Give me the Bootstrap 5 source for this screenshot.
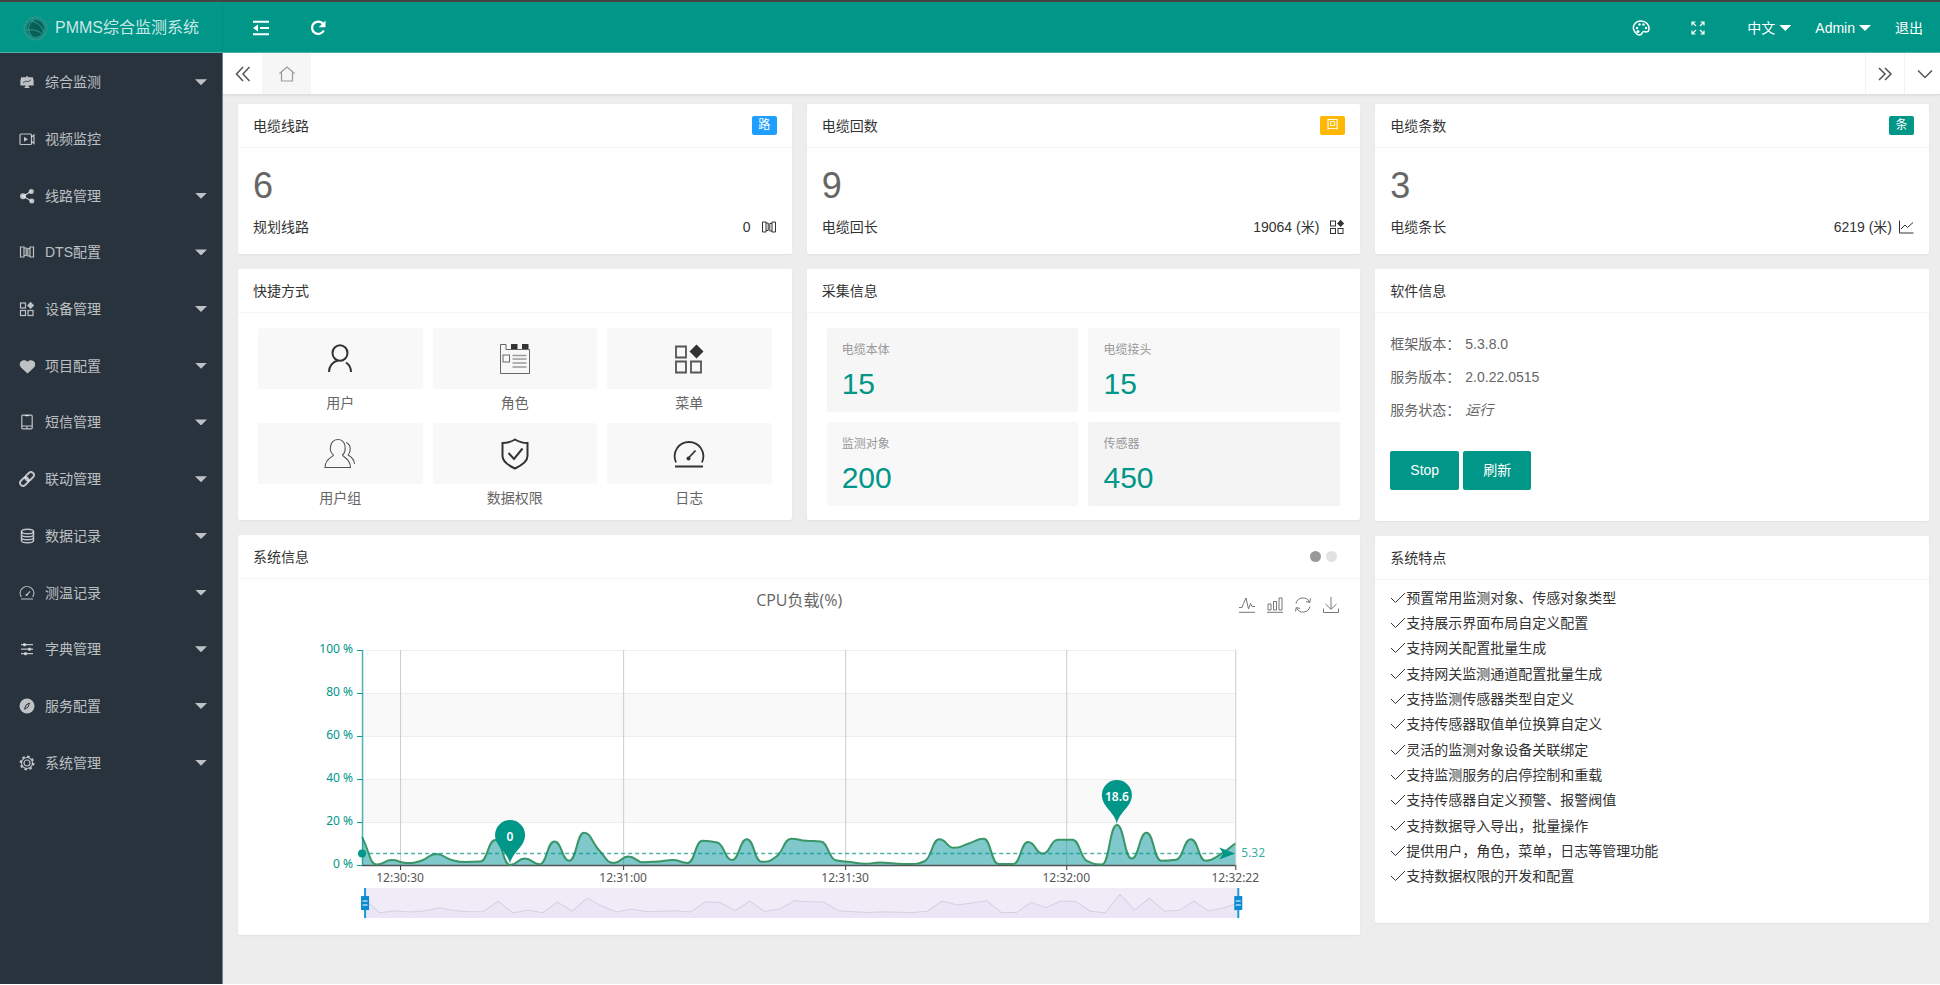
<!DOCTYPE html>
<html lang="zh-CN">
<head>
<meta charset="utf-8">
<meta name="viewport" content="width=device-width, initial-scale=1">
<title>PMMS综合监测系统</title>
<link href="https://cdn.jsdelivr.net/npm/bootstrap@5.3.0/dist/css/bootstrap.min.css" rel="stylesheet">
<style>
:root{--teal:#009688;--side:#28333e}
body{font-family:"Liberation Sans","Noto Sans CJK SC",sans-serif;font-size:14px;line-height:20px;color:#333;background:#ededed;border-top:2px solid #444;border-bottom:1px solid #fff}
a{color:inherit;text-decoration:none}
svg.ico{width:16px;height:16px;fill:none;stroke:currentColor;stroke-width:1.2;flex:none}
svg.ico.lg{width:18px;height:18px}
svg .solid{fill:currentColor;stroke:none}
.tri{width:12px;height:6px;background:currentColor;clip-path:polygon(0 0,100% 0,50% 100%);flex:none}
.btn-plain{background:none;border:0;padding:0;color:inherit;display:inline-flex;align-items:center}
.topbar{background:var(--teal);height:51px;color:#fff;border-bottom:1px solid #4db0a6;padding-top:2px}
.brandbox{width:223px;padding-left:23px;gap:7px;font-size:16px;color:rgba(255,255,255,.8);border-right:1px solid #028c80}
.brandbox svg{width:25px;height:25px}
.topleft{padding-left:29px;gap:39px}
.topright{padding-right:17px;gap:24px}
.topright .lg{margin-right:16px}
.topright .full{margin-right:17px}
.side{width:223px;background:var(--side);color:rgba(255,255,255,.7);border-right:1px solid #7a8188;padding-top:1px}
.menu{height:737px;display:grid;grid-template-rows:repeat(13,1fr)}
.menu a{display:flex;align-items:center;padding:0 15px 0 19px;gap:10px}
.menu .tri{margin-left:auto}
.tabs{height:42px;background:#fff;border-bottom:1px solid #ddd;color:#555;box-shadow:0 1px 2px rgba(0,0,0,.06)}
.tabs .hometab{width:49px;background:#f6f6f6;color:#999;display:flex;align-items:center;justify-content:center}
.tabs .sq{width:39px;justify-content:center}
.tabs .sq.last{padding-left:4px;width:36px}
.tabs .rule{border-left:1px solid #f2f2f2}
.content{padding:9px 11px 48px 15px}
.gut{--bs-gutter-x:15px;--bs-gutter-y:15px}
.panel{background:#fff;border-radius:2px;box-shadow:0 1px 2px rgba(0,0,0,.05)}
.panel-h{height:44px;border-bottom:1px solid #f5f5f5;padding:0 15px;display:flex;align-items:center;justify-content:space-between;margin:0;font-size:14px;font-weight:400;line-height:20px}
.tag{font-size:12px;line-height:18px;width:25px;text-align:center;color:#fff;border-radius:2px;height:19px}
.count{height:106px;padding:20px 15px 0}
.count .big{font-size:36px;line-height:36px;color:#666;margin-bottom:13px}
.count .ico{stroke-width:1}
.mid{height:207px;padding:15px 20px 0}
.tiles{display:grid;grid-template-columns:repeat(3,1fr);column-gap:10px;row-gap:5px;align-content:start;text-align:center;color:#666}
.tiles a{display:block}
.tiles .pic{height:61px;background:#f8f8f8;border-radius:2px;display:flex;align-items:center;justify-content:center;color:#333}
.tiles .pic svg{width:32px;height:32px}
.tiles .cap{display:block;height:29px;line-height:28px}
.stats{display:grid;grid-template-columns:repeat(2,1fr);gap:10px}
.stat{height:84px;background:#f8f8f8;border-radius:2px;padding:12px 15px;font-size:12px;color:#999}
.stat b{display:block;font-weight:400;font-size:30px;line-height:36px;color:var(--teal);margin-top:6px}
.soft{height:208px;padding:14px 15px 0;color:#666}
.soft dl{margin:0 0 25px}
.soft dl div{display:flex;height:33px;align-items:center}
.soft dt{font-weight:400;width:75px}
.soft dd{margin:0}
.btn-teal{--bs-btn-bg:var(--teal);--bs-btn-color:#fff;--bs-btn-border-width:0;--bs-btn-hover-bg:#33ab9f;--bs-btn-hover-color:#fff;--bs-btn-border-radius:2px;--bs-btn-font-size:14px;height:39px;padding:0 20px}
.feats{height:343px;padding:5px 15px 0}
.feats ul{list-style:none;margin:0;padding:0;height:304px;display:grid;grid-template-rows:repeat(12,1fr)}
.feats li{display:flex;align-items:center}
.pager{width:11px;height:11px;border-radius:50%;background:#e2e2e2;border:0;padding:0}
.pager.on{background:#999}
.charthead{display:grid;grid-template-columns:1fr auto 1fr;height:49px;padding:0 21px;color:#666}
.charthead .cap{font:16px/42px "Open Sans","Noto Sans CJK SC",sans-serif}
.charthead .tools{display:flex;justify-content:flex-end;gap:12px;padding-top:3px;color:#777}
.charthead .ico{stroke-width:1}
.plot{display:block;width:100%;height:auto;font:12px "Noto Sans","Noto Sans CJK SC",sans-serif}
</style>
</head>
<body class="d-flex flex-column min-vh-100">

<svg width="0" height="0" class="position-absolute" aria-hidden="true">
  <symbol id="i-board" viewBox="0 0 16 16"><path class="solid" d="M7.3 2h1.4v1.200h5.300v2h.6v6.300H9l1.800 2.500H5.200L7 11.500H1.400V5.200H2v-2h5.300z"/><path d="M4 8.800l3-1.800 2 .8 3-2" stroke="#28333e" stroke-width=".8"/></symbol>
  <symbol id="i-video" viewBox="0 0 16 16"><rect x="1" y="3" width="11.500" height="10.500" rx="1"/><path d="M12.500 6L15 4v8.500l-2.500-2"/><path class="solid" d="M5 5.800l4 2.500-4 2.500z"/></symbol>
  <symbol id="i-share" viewBox="0 0 16 16"><circle class="solid" cx="4" cy="8.300" r="3"/><circle class="solid" cx="12.300" cy="3.600" r="2.500"/><circle class="solid" cx="12.800" cy="13" r="2.500"/><path d="M12 3.500L4 8.300l8.500 4.700"/></symbol>
  <symbol id="i-cols" viewBox="0 0 16 16"><path d="M1.500 3H5v10H1.500zM11 3h3.500v10H11zM5 4h2.200v7.500H5M11 4.500H8.800V12H11"/></symbol>
  <symbol id="i-apps" viewBox="0 0 16 16"><rect x="1.500" y="2" width="5" height="5"/><rect x="1.500" y="9.500" width="5" height="5"/><rect x="9" y="9.500" width="5" height="5"/><path class="solid" d="M11.600 .8l3.500 3.600-3.500 3.600L8 4.400z"/></symbol>
  <symbol id="i-heart" viewBox="0 0 16 16"><path class="solid" d="M8.500 15.500L2 9.500C-2 5 4-.5 8.500 3.700 13-.5 19 5 15 9.500z"/></symbol>
  <symbol id="i-phone" viewBox="0 0 16 16"><rect x="2.800" y="1.200" width="10.400" height="13.600" rx="1"/><path d="M2.800 12h10.400M6 1.700h4M8 12.500v2"/></symbol>
  <symbol id="i-link" viewBox="0 0 16 16"><g stroke-width="1.900" transform="rotate(-45 8 8)"><rect x="-.5" y="5" width="9.500" height="6" rx="3"/><rect x="7" y="5" width="9.500" height="6" rx="3"/></g></symbol>
  <symbol id="i-db" viewBox="0 0 16 16"><g stroke-width="1.500"><ellipse cx="8.500" cy="3.500" rx="6" ry="2.300"/><path d="M2.500 3.500v9c0 3 12 3 12 0v-9M2.500 6.500c0 3 12 3 12 0M2.500 9.500c0 3 12 3 12 0"/></g></symbol>
  <symbol id="i-gauge" viewBox="0 0 16 16"><path d="M2.300 12A6.800 6.800 0 1 1 13.700 12M2 14h12M7.800 9.800L11 6.300"/><circle class="solid" cx="7.600" cy="10" r="1.100"/></symbol>
  <symbol id="i-sliders" viewBox="0 0 16 16"><path d="M2 3.700h12M2 8.200h12M2 12.700h12"/><path d="M5.500 2.200v3M10.500 6.700v3M6.500 11.200v3" stroke-width="2.400"/></symbol>
  <symbol id="i-compass" viewBox="0 0 16 16"><circle class="solid" cx="8" cy="8" r="7.500"/><path d="M10.500 5L9 9.200 5.500 11.200 7 7z" stroke="#28333e" stroke-width="1"/></symbol>
  <symbol id="i-gear" viewBox="0 0 16 16"><circle cx="8" cy="8" r="3"/><circle cx="8" cy="8" r="5.500"/><circle cx="8" cy="8" r="6.600" stroke-width="1.700" stroke-dasharray="2.600 2.580"/></symbol>
  <symbol id="i-check" viewBox="0 0 16 16"><path d="M1 8l4.500 4.500L15 3" stroke-width="1"/></symbol>
</svg>

<header class="topbar d-flex">
  <a href="#" class="brandbox d-flex align-items-center">
    <svg viewBox="0 0 25 25" fill="none"><circle cx="12.500" cy="12.500" r="11.200" stroke="#4f9189" stroke-width="1.800" stroke-dasharray="1.500 1.200"/><circle cx="12.500" cy="12.500" r="8.800" fill="#066057" stroke="#2f8078"/><path d="M10 4.500c-5 4-6 10-1 16M8 5c6 1 11 5 12.500 11M4 14c6-1 12 1 15 4" stroke="#37a095" stroke-width=".9"/></svg>
    <span>PMMS综合监测系统</span>
  </a>
  <div class="topleft d-flex align-items-center flex-grow-1">
    <button class="btn-plain" aria-label="收起菜单"><svg class="ico lg" viewBox="0 0 18 18"><path d="M1 2.800h16M8 9h9M1 15.200h16" stroke-width="2"/><path class="solid" d="M1 9l5-3.500v7z"/></svg></button>
    <button class="btn-plain" aria-label="刷新"><svg class="ico lg" viewBox="0 0 18 18"><path d="M14.200 5A6.200 6.200 0 1 0 14.800 11.500" stroke-width="2.300"/><path class="solid" d="M16.500 1.500v6.800H9.700z"/></svg></button>
  </div>
  <nav class="topright d-flex align-items-center">
    <button class="btn-plain" aria-label="主题"><svg class="ico lg" viewBox="0 0 18 18"><path d="M3 13C-1 8 3 2 9 2c5 0 8.500 4 8 8.500-.3 3-3.500 2.500-5 2-2-.5-1.500 3.500-4.500 3.500-2 0-3.500-1.500-4.500-3z" stroke-width="1.500"/><g class="solid"><circle cx="5" cy="9" r="1.200"/><circle cx="7.500" cy="5.500" r="1.200"/><circle cx="11.500" cy="5.500" r="1.200"/><circle cx="14" cy="9" r="1.200"/><circle cx="6" cy="12.500" r="1.500"/></g></svg></button>
    <button class="btn-plain full" aria-label="全屏"><svg class="ico" viewBox="0 0 16 16"><path d="M2 5.500V2h3.500M2 2l4 4M10.500 2H14v3.500M14 2l-4 4M2 10.500V14h3.500M2 14l4-4M14 10.500V14h-3.500M14 14l-4-4"/></svg></button>
    <a href="#" class="d-flex align-items-center gap-1">中文<span class="tri"></span></a>
    <a href="#" class="d-flex align-items-center gap-1">Admin<span class="tri"></span></a>
    <a href="#">退出</a>
  </nav>
</header>

<div class="d-flex flex-grow-1">
  <aside class="side flex-shrink-0">
    <nav class="menu">
      <a href="#"><svg class="ico"><use href="#i-board"/></svg>综合监测<span class="tri"></span></a>
      <a href="#"><svg class="ico"><use href="#i-video"/></svg>视频监控</a>
      <a href="#"><svg class="ico"><use href="#i-share"/></svg>线路管理<span class="tri"></span></a>
      <a href="#"><svg class="ico"><use href="#i-cols"/></svg>DTS配置<span class="tri"></span></a>
      <a href="#"><svg class="ico"><use href="#i-apps"/></svg>设备管理<span class="tri"></span></a>
      <a href="#"><svg class="ico"><use href="#i-heart"/></svg>项目配置<span class="tri"></span></a>
      <a href="#"><svg class="ico"><use href="#i-phone"/></svg>短信管理<span class="tri"></span></a>
      <a href="#"><svg class="ico"><use href="#i-link"/></svg>联动管理<span class="tri"></span></a>
      <a href="#"><svg class="ico"><use href="#i-db"/></svg>数据记录<span class="tri"></span></a>
      <a href="#"><svg class="ico"><use href="#i-gauge"/></svg>测温记录<span class="tri"></span></a>
      <a href="#"><svg class="ico"><use href="#i-sliders"/></svg>字典管理<span class="tri"></span></a>
      <a href="#"><svg class="ico"><use href="#i-compass"/></svg>服务配置<span class="tri"></span></a>
      <a href="#"><svg class="ico"><use href="#i-gear"/></svg>系统管理<span class="tri"></span></a>
    </nav>
  </aside>

  <div class="flex-grow-1">
    <div class="tabs d-flex">
      <button class="btn-plain sq" aria-label="向左"><svg class="ico" viewBox="0 0 16 16"><path d="M8 1L1.500 8 8 15M14.500 1L8 8l6.500 7" stroke-width="1.500"/></svg></button>
      <a href="#" class="hometab" aria-label="主页"><svg class="ico" viewBox="0 0 16 16"><path d="M.5 7.500L8 1l7.500 6.500M2.500 6.500v8.500h11V6.500"/></svg></a>
      <button class="btn-plain sq rule ms-auto" aria-label="向右"><svg class="ico" viewBox="0 0 16 16"><path d="M2 2l6 6-6 6M8 2l6 6-6 6" stroke-width="1.500"/></svg></button>
      <button class="btn-plain sq last rule" aria-label="更多"><svg class="ico" viewBox="0 0 16 16"><path d="M1 4.500l7 7 7-7" stroke-width="1.500"/></svg></button>
    </div>

    <main class="content">
      <div class="row gut">
        <div class="col-8">
          <div class="row gut">
            <div class="col-6"><section class="panel">
              <h2 class="panel-h">电缆线路<span class="tag" style="background:#1e9fff">路</span></h2>
              <div class="count"><div class="big">6</div><div class="d-flex justify-content-between">规划线路<span class="d-flex align-items-center" style="gap:10px">0 <svg class="ico"><use href="#i-cols"/></svg></span></div></div>
            </section></div>
            <div class="col-6"><section class="panel">
              <h2 class="panel-h">电缆回数<span class="tag" style="background:#ffb800">回</span></h2>
              <div class="count"><div class="big">9</div><div class="d-flex justify-content-between">电缆回长<span class="d-flex align-items-center" style="gap:10px">19064 (米) <svg class="ico"><use href="#i-apps"/></svg></span></div></div>
            </section></div>
            <div class="col-6"><section class="panel">
              <h2 class="panel-h">快捷方式</h2>
              <div class="mid tiles">
                <a href="#"><span class="pic"><svg viewBox="0 0 32 32" fill="none" stroke="currentColor" stroke-width="2"><ellipse cx="16" cy="10" rx="7.500" ry="7.800"/><path d="M5 29c0-6 4-10.500 9-11.500M22 19.500c3 2 5 5.500 5 9.500"/></svg></span><span class="cap">用户</span></a>
                <a href="#"><span class="pic"><svg viewBox="0 0 32 32" fill="none" stroke="#666" stroke-width="1"><path d="M1.500 1.500h5.500v5h23.500v24h-29z"/><rect x="4" y="12" width="6.500" height="7"/><path d="M13.500 12.500h14M13.500 16h14M13.500 20h14M13.500 24h14" stroke="#999" stroke-width="1.300"/><path fill="#333" stroke="none" d="M12 1h6.500v5H12zM23 1h6.500v5H23z"/></svg></span><span class="cap">角色</span></a>
                <a href="#"><span class="pic"><svg viewBox="0 0 32 32" fill="none" stroke="#555" stroke-width="1.800"><path d="M3 3.500h10v11H3zM3 18.500h10v11H3zM18 18.500h10v11H18z"/><path fill="#333" stroke="none" d="M23.500 1.500l7 7-7 7-7-7z"/></svg></span><span class="cap">菜单</span></a>
                <a href="#"><span class="pic"><svg viewBox="0 0 32 32" fill="none" stroke="#555" stroke-width="1.100"><path d="M9.500 17C4 13 6 1.500 14 1.500S23 13 18.500 17c0 2 8 3.500 8 12.500H1C1 20 9.500 19 9.500 17z"/><path d="M22 4.500c5.500 2 5 9 2.200 12.500 3.500 2 6 4.500 6.300 9"/></svg></span><span class="cap">用户组</span></a>
                <a href="#"><span class="pic"><svg viewBox="0 0 32 32" fill="none" stroke="#333" stroke-width="2"><path d="M16 1.500c4 2.500 8 3.500 12.500 3.500v13c0 5-5 9-12.500 12.500C8.500 27 3.500 23 3.500 18V5C8 5 12 4 16 1.500z"/><path d="M9.500 15l5.500 6 8.500-10.500"/></svg></span><span class="cap">数据权限</span></a>
                <a href="#"><span class="pic"><svg viewBox="0 0 32 32" fill="none" stroke="#333" stroke-width="1.800"><path d="M3 24.500C-1.500 14 6 4 16 4s17.500 10 13 20.500M2 28.500h28M15.500 20l7-7.500"/><circle cx="15.500" cy="20.500" r="2" fill="#333" stroke="none"/></svg></span><span class="cap">日志</span></a>
              </div>
            </section></div>
            <div class="col-6"><section class="panel">
              <h2 class="panel-h">采集信息</h2>
              <div class="mid"><div class="stats">
                <div class="stat" style="background:#f6f6f6">电缆本体<b>15</b></div>
                <div class="stat">电缆接头<b>15</b></div>
                <div class="stat">监测对象<b>200</b></div>
                <div class="stat" style="background:#f4f4f4">传感器<b>450</b></div>
              </div></div>
            </section></div>
            <div class="col-12"><section class="panel">
              <h2 class="panel-h">系统信息<span class="d-flex" style="gap:5px;margin-right:8px"><button class="pager on" aria-label="第1页"></button><button class="pager" aria-label="第2页"></button></span></h2>
              <div class="charthead">
                <span></span><span class="cap">CPU负载(%)</span>
                <div class="tools">
                  <button class="btn-plain" aria-label="折线图"><svg class="ico" viewBox="0 0 16 16"><path d="M0 10.500h3l1.500-4L7 1l2.500 11 2-5.500 1.500 3h3M0 15.300h16"/></svg></button>
                  <button class="btn-plain" aria-label="柱状图"><svg class="ico" viewBox="0 0 16 16"><path d="M1 7h3v6H1zM6.500 4.500h3V13h-3zM12 1h3v12h-3zM0 15.300h16"/></svg></button>
                  <button class="btn-plain" aria-label="还原"><svg class="ico" viewBox="0 0 16 16"><path d="M1 6.500A7.200 7.200 0 0 1 14.500 5M15 9.500A7.200 7.200 0 0 1 1.500 11M15.500 1.500l-.7 4-3.800-1M.5 14.500l.7-4 3.800 1"/></svg></button>
                  <button class="btn-plain" aria-label="保存为图片"><svg class="ico" viewBox="0 0 16 16"><path d="M8 0v12M2.500 7L8 12.300 13.500 7M.5 11.500v4h15v-4"/></svg></button>
                </div>
              </div>
              <svg class="plot" id="plot" viewBox="0 0 1122 307" role="img" aria-label="CPU负载"></svg>
            </section></div>
          </div>
        </div>

        <div class="col-4">
          <div class="row gut">
            <div class="col-12"><section class="panel">
              <h2 class="panel-h">电缆条数<span class="tag" style="background:#009688">条</span></h2>
              <div class="count"><div class="big">3</div><div class="d-flex justify-content-between">电缆条长<span class="d-flex align-items-center" style="gap:6px">6219 (米) <svg class="ico" viewBox="0 0 16 16"><path d="M1.500 1.500v12.500h14M3 10l4-4 2.500 2.500L15 3.500"/></svg></span></div></div>
            </section></div>
            <div class="col-12"><section class="panel">
              <h2 class="panel-h">软件信息</h2>
              <div class="soft">
                <dl>
                  <div><dt>框架版本：</dt><dd>5.3.8.0</dd></div>
                  <div><dt>服务版本：</dt><dd>2.0.22.0515</dd></div>
                  <div><dt>服务状态：</dt><dd><em>运行</em></dd></div>
                </dl>
                <div class="d-flex gap-1"><button class="btn btn-teal">Stop</button><button class="btn btn-teal">刷新</button></div>
              </div>
            </section></div>
            <div class="col-12"><section class="panel">
              <h2 class="panel-h">系统特点</h2>
              <div class="feats"><ul>
                <li><svg class="ico"><use href="#i-check"/></svg>预置常用监测对象、传感对象类型</li>
                <li><svg class="ico"><use href="#i-check"/></svg>支持展示界面布局自定义配置</li>
                <li><svg class="ico"><use href="#i-check"/></svg>支持网关配置批量生成</li>
                <li><svg class="ico"><use href="#i-check"/></svg>支持网关监测通道配置批量生成</li>
                <li><svg class="ico"><use href="#i-check"/></svg>支持监测传感器类型自定义</li>
                <li><svg class="ico"><use href="#i-check"/></svg>支持传感器取值单位换算自定义</li>
                <li><svg class="ico"><use href="#i-check"/></svg>灵活的监测对象设备关联绑定</li>
                <li><svg class="ico"><use href="#i-check"/></svg>支持监测服务的启停控制和重载</li>
                <li><svg class="ico"><use href="#i-check"/></svg>支持传感器自定义预警、报警阀值</li>
                <li><svg class="ico"><use href="#i-check"/></svg>支持数据导入导出，批量操作</li>
                <li><svg class="ico"><use href="#i-check"/></svg>提供用户，角色，菜单，日志等管理功能</li>
                <li><svg class="ico"><use href="#i-check"/></svg>支持数据权限的开发和配置</li>
              </ul></div>
            </section></div>
          </div>
        </div>
      </div>
    </main>
  </div>
</div>

<script src="https://cdn.jsdelivr.net/npm/bootstrap@5.3.0/dist/js/bootstrap.bundle.min.js"></script>
<script>
// CPU load samples in percent, one every two seconds
const load=[13,.3,2.3,1,2,5.2,2.5,1.4,1.6,11.7,0,3,.4,11,2,15,7,1,4,1.3,1.7,2.3,1,11.3,10.5,2.3,12,1.5,4,12.2,11.3,11,2.2,1.4,.6,1.2,.7,.5,1.8,12,8,10,12.2,.5,.5,10.7,5.3,11.8,11.8,1.8,.3,18.6,3,15,2,2.5,12,2,5,10];
const L=124,R=997,T=22,B=237,step=(R-L)/(load.length-1);
const X=i=>L+i*step, Y=v=>B-v*(B-T)/100;
const clamp=(v,a,b)=>Math.max(Math.min(a,b),Math.min(Math.max(a,b),v));
// smooth curve: half-step handles, kept between neighbouring samples
function curve(){
  const y=load.map(Y),n=y.length,m=[0];
  for(let i=1;i<n-1;i++){
    let v=clamp(y[i]+(y[i+1]-y[i-1])/4,y[i],y[i+1])-y[i];
    v=y[i]-clamp(y[i]-v,y[i-1],y[i]);
    m[i]=v;
  }
  m[0]=(y[1]-y[0])/2;m[n-1]=(y[n-1]-y[n-2])/2;
  let p=`M${X(0)} ${y[0]}`;
  for(let i=0;i<n-1;i++)p+=`C${X(i)+step/2} ${y[i]+m[i]} ${X(i+1)-step/2} ${y[i+1]-m[i+1]} ${X(i+1)} ${y[i+1]}`;
  return p;
}
let s='';
for(const a of [80,40])s+=`<rect x="${L}" y="${Y(a)}" width="${R-L}" height="43" fill="#f9f9f9"/>`;
for(let v=0;v<=100;v+=20)s+=`<path d="M${L} ${Y(v)+.5}H${R}" stroke="#eee"/><path d="M${L-5} ${Y(v)+.5}h5" stroke="#009688"/><text x="${L-9}" y="${Y(v)+3}" text-anchor="end" fill="#009688">${v} %</text>`;
for(const [x,t] of [[162,'12:30:30'],[385,'12:31:00'],[607,'12:31:30'],[828,'12:32:00'],[997,'12:32:22']])s+=`<path d="M${x+.5} ${T}V${B}" stroke="#ccc"/><path d="M${x+.5} ${B}v5" stroke="#333"/><text x="${x}" y="${B+17}" text-anchor="middle" fill="#555">${t}</text>`;
const c=curve();
s+=`<path d="${c}L${R} ${B}H${L}Z" fill="#009199" fill-opacity=".5"/><path d="M${L} ${B+.5}H${R}" stroke="#555" stroke-width="1.5"/><path d="${c}" fill="none" stroke="#3a9668" stroke-width="2"/><path d="M${L+.5} ${T}V${B}" stroke="#009688" stroke-opacity=".7" stroke-width="1.5"/>`;
const avg=Y(5.32);
s+=`<path d="M${L} ${avg}H${R-12}" stroke="#009688" stroke-opacity=".7" stroke-width="1.5" stroke-dasharray="4 3"/><circle cx="${L}" cy="${avg}" r="4" fill="#009688"/><path d="M${R} ${avg}l-16-6 4 6-4 6z" fill="#009688"/><text x="${R+6}" y="${avg+3}" fill="#009688" fill-opacity=".8">5.32</text>`;
for(const [i,t] of [[10,'0'],[51,'18.6']]){const x=X(i),y=Y(load[i])-1;
  s+=`<path d="M${x} ${y}C${x-2} ${y-12} ${x-15} ${y-17} ${x-15} ${y-29}a15 15 0 0 1 30 0C${x+15} ${y-17} ${x+2} ${y-12} ${x} ${y}z" fill="#009688"/><text x="${x}" y="${y-23}" text-anchor="middle" fill="#fff" font-weight="600">${t}</text>`;}
// range slider below the plot
const sx=i=>L+3+i*873/59, sy=v=>285-v;
const mini=load.map((v,i)=>`${sx(i)},${sy(v)}`).join(' ');
s+=`<rect x="${L+3}" y="260" width="873" height="30" fill="#efebf7"/><polygon points="${mini} ${sx(59)},290 ${sx(0)},290" fill="#ebe6f5"/><polyline points="${mini}" fill="none" stroke="#d6cfe2"/>`;
for(const x of [127,1000])s+=`<path d="M${x} 260v30" stroke="#1c9ad8" stroke-width="2"/><rect x="${x-4}" y="268" width="8" height="14" fill="#0a8bd0"/><path d="M${x-2.5} 273h5M${x-2.5} 277h5" stroke="#fff"/>`;
document.getElementById('plot').innerHTML=s;
</script>
</body>
</html>
